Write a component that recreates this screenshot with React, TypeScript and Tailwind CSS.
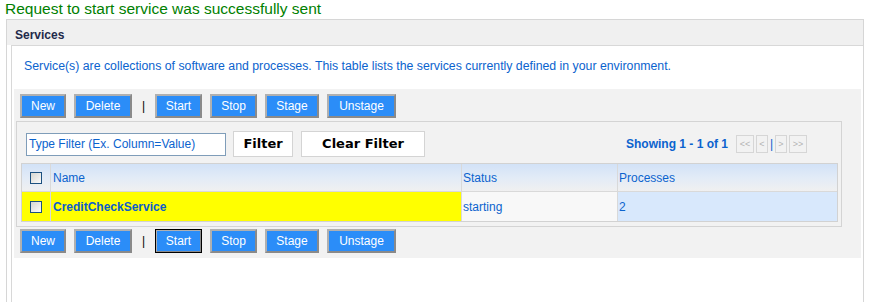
import React from "react";

const btnBase =
  "h-[24px] bg-[#2b8df8] text-white text-[12px] leading-none border-2 border-t-[#b0b0b0] border-l-[#b0b0b0] border-r-[#8a8a8a] border-b-[#8a8a8a] flex items-center justify-center";

function Toolbar({ focusStart }: { focusStart?: boolean }) {
  return (
    <div className="flex items-center gap-2">
      <button className={`${btnBase} w-[46px]`}>New</button>
      <button className={`${btnBase} w-[58px]`}>Delete</button>
      <span className="w-[7px] text-center text-[12px] leading-none text-black">|</span>
      <button
        className={`${btnBase} w-[47px] ${focusStart ? "outline-1 outline-black -outline-offset-1" : ""}`}
      >
        Start
      </button>
      <button className={`${btnBase} w-[47px]`}>Stop</button>
      <button className={`${btnBase} w-[54px]`}>Stage</button>
      <button className={`${btnBase} w-[69px]`}>Unstage</button>
    </div>
  );
}

function Check() {
  return (
    <span className="block w-[12px] h-[12px] border border-[#1c5180] bg-gradient-to-br from-[#d6d6d0] to-[#fbfbfb]" />
  );
}

function PageBtn({ label, w }: { label: string; w: string }) {
  return (
    <span
      className={`${w} h-[18px] border border-[#d6d6d6] text-[#b4b4b4] text-[9px] leading-none flex items-center justify-center`}
    >
      {label}
    </span>
  );
}

export default function App() {
  return (
    <div className="w-[873px] h-[302px] overflow-hidden bg-white font-['Liberation_Sans',Arial,sans-serif] text-[12px]">
      <div className="h-[19px] pl-[5px] text-[15.5px] leading-[18px] text-[#008000]">
        Request to start service was successfully sent
      </div>
      <div className="ml-[6px] w-[858px] h-[300px] border border-[#d6d6d6] flex flex-col">
        <div className="h-[25px] pt-[8px] pl-[8px] bg-[#f0f0f0] font-bold text-[12px] leading-[14px] text-[#1f2a4a]">
          Services
        </div>
        <div className="ml-[4px] flex-1 border-l border-t border-[#d8d8d8] bg-white flex flex-col">
          <div className="pt-[13px] pl-[12px] text-[12.3px] leading-[14px] text-[#0b63ce]">
            Service(s) are collections of software and processes. This table lists the services currently defined
            in your environment.
          </div>
          <div className="mt-[16px] ml-[2px] w-[847px] bg-[#f2f2f2] pt-[5px] pb-[5px] flex flex-col">
            <div className="pl-[6px]">
              <Toolbar />
            </div>
            <div className="mt-[3px] ml-[2px] w-[826px] border border-[#d4d4d4] bg-[#f2f2f2] pl-[4px] pt-[9px] pb-[4px] flex flex-col">
              <div className="pl-[5px] pr-[34px] flex items-center h-[26px]">
                <div className="w-[200px] h-[23px] border border-[#7f9db9] bg-white pl-[2px] flex items-center text-[12px] text-[#0b63ce]">
                  Type Filter (Ex. Column=Value)
                </div>
                <button className="ml-[7px] w-[60px] h-[26px] bg-white border border-[#d4d4d4] font-['DejaVu_Sans',sans-serif] font-bold text-[13px] text-black flex items-center justify-center">
                  Filter
                </button>
                <button className="ml-[8px] w-[124px] h-[26px] bg-white border border-[#d4d4d4] font-['DejaVu_Sans',sans-serif] font-bold text-[13px] text-black flex items-center justify-center">
                  Clear Filter
                </button>
                <div className="ml-auto flex items-center">
                  <span className="font-bold text-[12px] text-[#0b63ce] mr-[8px]">Showing 1 - 1 of 1</span>
                  <PageBtn label="<<" w="w-[18px]" />
                  <span className="ml-[2px]" />
                  <PageBtn label="<" w="w-[12px]" />
                  <span className="w-[7px] text-center text-[12px] text-[#0b63ce] leading-none">|</span>
                  <PageBtn label=">" w="w-[12px]" />
                  <span className="ml-[2px]" />
                  <PageBtn label=">>" w="w-[18px]" />
                </div>
              </div>
              <div className="mt-[6px] w-[817px] border border-[#d2d2d2] bg-[#d9d9d9] grid grid-cols-[28px_410px_155px_219px] grid-rows-[27px_29px] gap-px">
                <div className="bg-gradient-to-b from-[#d2e2f7] via-[#e2ebf7] to-[#f0f0f0] flex items-center justify-center">
                  <Check />
                </div>
                <div className="bg-gradient-to-b from-[#d2e2f7] via-[#e2ebf7] to-[#f0f0f0] flex items-center pl-[2px] text-[#0b63ce]">
                  Name
                </div>
                <div className="bg-gradient-to-b from-[#d2e2f7] via-[#e2ebf7] to-[#f0f0f0] flex items-center pl-[1px] text-[#0b63ce]">
                  Status
                </div>
                <div className="bg-gradient-to-b from-[#d2e2f7] via-[#e2ebf7] to-[#f0f0f0] flex items-center pl-[1px] text-[#0b63ce]">
                  Processes
                </div>
                <div className="bg-[#ffff00] flex items-center justify-center">
                  <Check />
                </div>
                <div className="bg-[#ffff00] flex items-center pl-[2px] font-bold text-[#0b5ccc]">CreditCheckService</div>
                <div className="bg-[#f8f8f8] flex items-center pl-[1px] text-[#0b63ce]">starting</div>
                <div className="bg-[#d8e8fc] flex items-center pl-[1px] text-[#0b63ce]">2</div>
              </div>
            </div>
            <div className="pl-[6px] mt-[2px]">
              <Toolbar focusStart />
            </div>
          </div>
        </div>
      </div>
    </div>
  );
}
